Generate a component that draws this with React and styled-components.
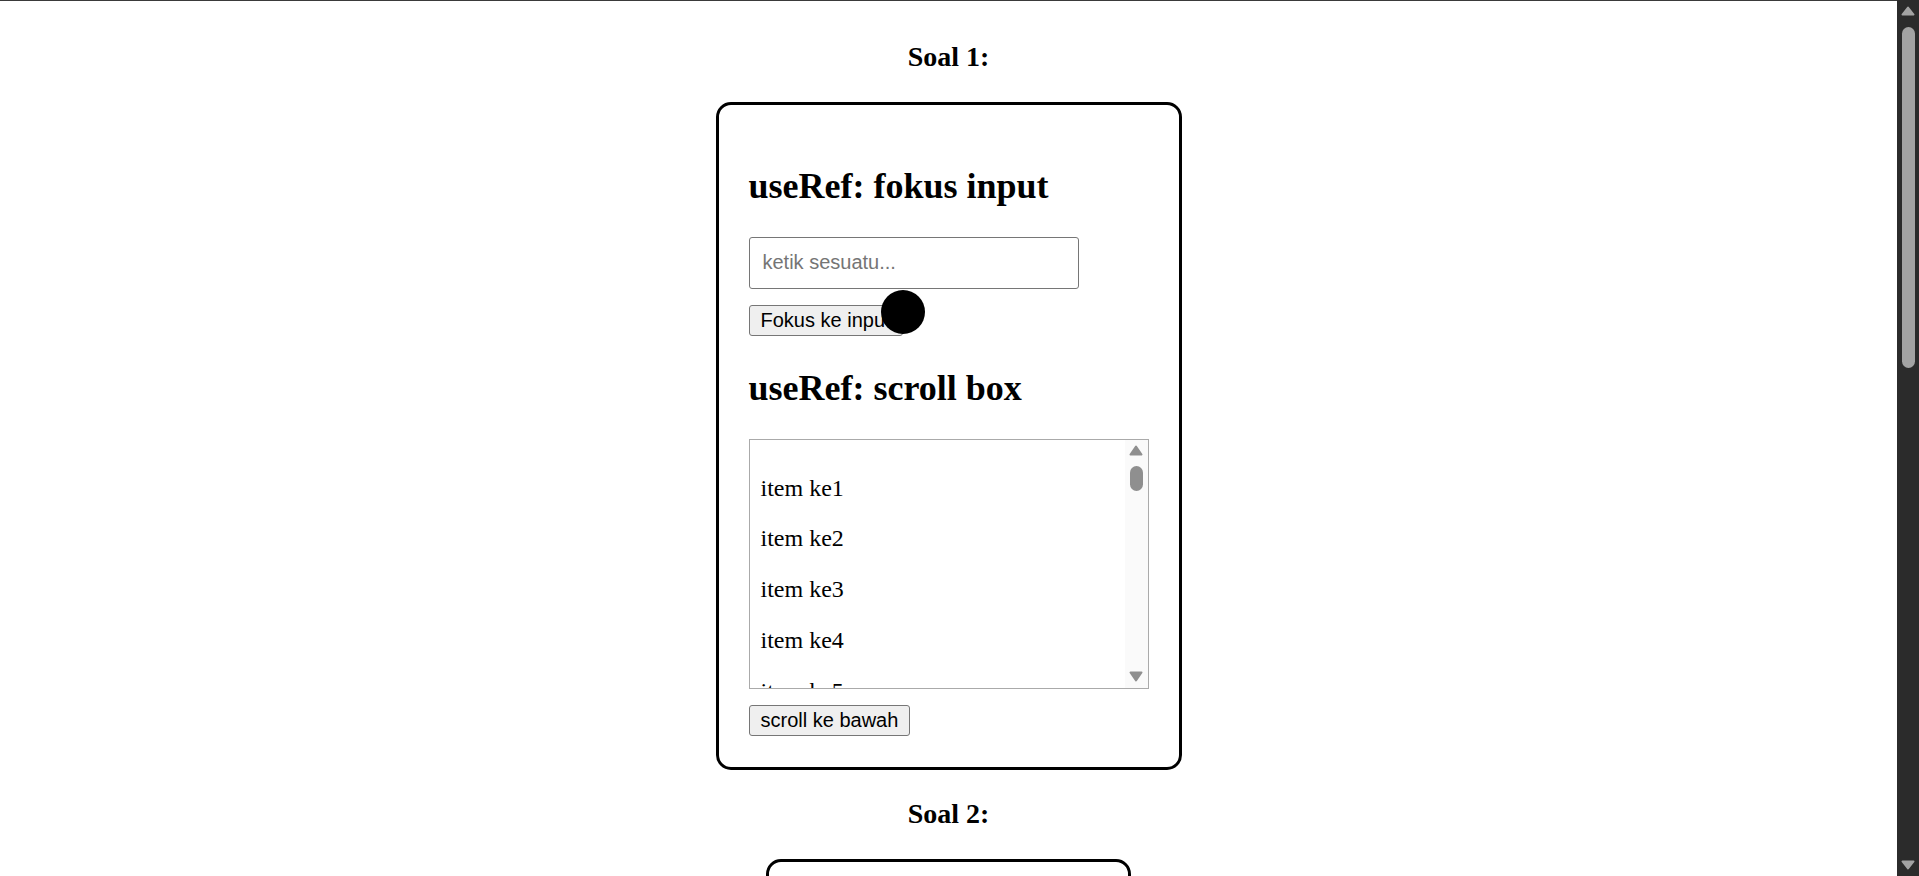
import React, { useRef, useState, useEffect, useCallback } from "react";
import styled, { createGlobalStyle } from "styled-components";

const GlobalStyle = createGlobalStyle`
  html {
    border-top: 1px solid #3a3a3a;
    background: #ffffff;
    scrollbar-width: none;
  }
  html::-webkit-scrollbar {
    display: none;
  }
  body {
    margin: 12px;
    font-family: "Liberation Serif", "Times New Roman", serif;
    font-size: 24px;
    color: #000000;
  }
`;

const Page = styled.main`
  display: flex;
  flex-direction: column;
  align-items: center;
  margin-right: 22px;
`;

const SoalTitle = styled.h3`
  margin: 28px 0 29px;
  font-size: 28px;
  line-height: 32px;
  font-weight: bold;
  text-align: center;
`;

const Card = styled.section`
  box-sizing: border-box;
  width: ${(p) => p.$width}px;
  border: 3px solid #000000;
  border-radius: 15px;
  padding: 30px;
`;

const SectionTitle = styled.h2`
  margin: 29.9px 0;
  font-size: 36px;
  line-height: 42px;
  font-weight: bold;
`;

const TextInput = styled.input`
  display: block;
  box-sizing: border-box;
  width: 330px;
  margin: 0 0 16px;
  padding: 13.5px 13px;
  font-family: "Liberation Sans", Arial, sans-serif;
  font-size: 20px;
  line-height: 23px;
  color: #000000;
  background: #ffffff;
  border: 1px solid #767676;
  border-radius: 3px;
  outline: none;

  &::placeholder {
    color: #757575;
  }
`;

const ControlRow = styled.div`
  display: flex;
  align-items: flex-start;
  gap: 9px;
  min-height: 32px;
`;

const Button = styled.button`
  font-family: "Liberation Sans", Arial, sans-serif;
  font-size: 20px;
  line-height: 25px;
  padding: 2px 11px;
  color: #000000;
  background: #efefef;
  border: 1px solid #767676;
  border-radius: 3px;
  cursor: pointer;
`;

/* ---------- scroll box with its own scrollbar ---------- */

const ScrollFrame = styled.div`
  box-sizing: border-box;
  display: flex;
  width: 400px;
  height: 250px;
  margin-bottom: 16px;
  border: 1px solid #aaaaaa;
  background: #ffffff;
`;

const ScrollViewport = styled.div`
  flex: 1;
  min-width: 0;
  padding: 11px;
  overflow-y: scroll;
  scrollbar-width: none;

  &::-webkit-scrollbar {
    display: none;
  }
`;

const Rail = styled.div`
  display: flex;
  flex-direction: column;
  width: ${(p) => p.$size}px;
  flex-shrink: 0;
  background: ${(p) => p.$track};
`;

const RailArrow = styled.button`
  display: flex;
  align-items: center;
  justify-content: center;
  height: ${(p) => p.$height}px;
  padding: 0;
  border: 0;
  background: transparent;
  cursor: default;
`;

const RailTrack = styled.div`
  position: relative;
  flex: 1;
`;

const RailThumb = styled.div`
  position: absolute;
  left: 50%;
  width: 13px;
  margin-left: -6.5px;
  border-radius: 7px;
  background: ${(p) => p.$color};
`;

const Triangle = ({ dir, color, w = 14, h = 11 }) => (
  <svg width={w} height={h} viewBox={`0 0 ${w} ${h}`} aria-hidden="true">
    <polygon
      points={
        dir === "up"
          ? `${w / 2},1.5 ${w - 1.5},${h - 1.5} 1.5,${h - 1.5}`
          : `1.5,1.5 ${w - 1.5},1.5 ${w / 2},${h - 1.5}`
      }
      fill={color}
      stroke={color}
      strokeWidth="2"
      strokeLinejoin="round"
    />
  </svg>
);

const Item = styled.p`
  margin: 24px 0;
  line-height: 26.8px;
`;

const Text = styled.p`
  margin: 24px 0;
  line-height: 27.6px;
`;

const PlayArea = styled.div`
  box-sizing: border-box;
  height: 390px;
  margin: 24px 0;
  border: 1px dashed #999999;
  border-radius: 6px;
  display: flex;
  align-items: center;
  justify-content: center;
  color: #555555;
`;

const Follower = styled.div`
  position: fixed;
  width: 44px;
  height: 44px;
  margin: -22px 0 0 -22px;
  border-radius: 50%;
  background: #000000;
  pointer-events: none;
  z-index: 10;
`;

/* ---------- page scrollbar (fixed on the right) ---------- */

const PageRail = styled.div`
  position: fixed;
  top: 0;
  right: 0;
  bottom: 0;
  display: flex;
  flex-direction: column;
  width: 22px;
  background: #2b2b2b;
  z-index: 20;
`;

const items = Array.from({ length: 40 }, (_, i) => i + 1);

function ScrollList({ boxRef }) {
  const [thumb, setThumb] = useState({ top: 4.7, len: 25 });
  const trackRef = useRef(null);

  const update = useCallback(() => {
    const el = boxRef.current;
    const track = trackRef.current;
    if (!el || !track) return;
    const inset = 4.7;
    const avail = track.clientHeight - inset * 2;
    const len = Math.max(25, (avail * el.clientHeight) / el.scrollHeight);
    const max = el.scrollHeight - el.clientHeight;
    const top = inset + (max > 0 ? ((avail - len) * el.scrollTop) / max : 0);
    setThumb({ top, len });
  }, [boxRef]);

  useEffect(() => {
    update();
  }, [update]);

  const step = (d) => {
    if (boxRef.current) boxRef.current.scrollTop += d;
  };

  return (
    <ScrollFrame>
      <ScrollViewport ref={boxRef} onScroll={update}>
        {items.map((n) => (
          <Item key={n}>item ke{n}</Item>
        ))}
      </ScrollViewport>
      <Rail $size={23} $track="#fafafa">
        <RailArrow $height={22} onClick={() => step(-40)} aria-label="scroll up">
          <Triangle dir="up" color="#8f8f8f" />
        </RailArrow>
        <RailTrack ref={trackRef}>
          <RailThumb $color="#8f8f8f" style={{ top: thumb.top, height: thumb.len }} />
        </RailTrack>
        <RailArrow $height={22} onClick={() => step(40)} aria-label="scroll down">
          <Triangle dir="down" color="#8f8f8f" />
        </RailArrow>
      </Rail>
    </ScrollFrame>
  );
}

function PageScrollbar() {
  const [thumb, setThumb] = useState({ top: 5, len: 338 });
  const trackRef = useRef(null);

  useEffect(() => {
    const update = () => {
      const track = trackRef.current;
      if (!track) return;
      const doc = document.documentElement;
      const inset = 5;
      const avail = track.clientHeight - inset * 2;
      const len = Math.max(30, (avail * window.innerHeight) / doc.scrollHeight);
      const max = doc.scrollHeight - window.innerHeight;
      const top = inset + (max > 0 ? ((avail - len) * window.scrollY) / max : 0);
      setThumb({ top, len });
    };
    update();
    window.addEventListener("scroll", update);
    window.addEventListener("resize", update);
    return () => {
      window.removeEventListener("scroll", update);
      window.removeEventListener("resize", update);
    };
  }, []);

  return (
    <PageRail>
      <RailArrow $height={22} onClick={() => window.scrollBy(0, -40)} aria-label="page up">
        <Triangle dir="up" color="#a3a3a3" w={14} h={10} />
      </RailArrow>
      <RailTrack ref={trackRef}>
        <RailThumb $color="#a3a3a3" style={{ top: thumb.top, height: thumb.len }} />
      </RailTrack>
      <RailArrow $height={22} onClick={() => window.scrollBy(0, 40)} aria-label="page down">
        <Triangle dir="down" color="#a3a3a3" w={14} h={10} />
      </RailArrow>
    </PageRail>
  );
}

function SoalSatu() {
  const inputRef = useRef(null);
  const boxRef = useRef(null);

  const focusInput = () => {
    inputRef.current && inputRef.current.focus();
  };

  const scrollDown = () => {
    if (boxRef.current) {
      boxRef.current.scrollTop = boxRef.current.scrollHeight;
    }
  };

  return (
    <Card $width={466}>
      <SectionTitle>useRef: fokus input</SectionTitle>
      <TextInput ref={inputRef} placeholder="ketik sesuatu..." />
      <ControlRow>
        <Button onClick={focusInput}>Fokus ke input</Button>
      </ControlRow>
      <SectionTitle>useRef: scroll box</SectionTitle>
      <ScrollList boxRef={boxRef} />
      <ControlRow>
        <Button onClick={scrollDown}>scroll ke bawah</Button>
      </ControlRow>
    </Card>
  );
}

function SoalDua() {
  const [seconds, setSeconds] = useState(0);
  const timerRef = useRef(null);
  const [count, setCount] = useState(0);
  const prevRef = useRef(0);

  useEffect(() => {
    prevRef.current = count;
  }, [count]);

  useEffect(() => () => clearInterval(timerRef.current), []);

  const start = () => {
    if (timerRef.current) return;
    timerRef.current = setInterval(() => setSeconds((s) => s + 1), 1000);
  };
  const stop = () => {
    clearInterval(timerRef.current);
    timerRef.current = null;
  };
  const reset = () => {
    stop();
    setSeconds(0);
  };

  return (
    <Card $width={365}>
      <SectionTitle>useRef: stopwatch</SectionTitle>
      <Text>Waktu: {seconds} detik</Text>
      <ControlRow>
        <Button onClick={start}>Mulai</Button>
        <Button onClick={stop}>Stop</Button>
        <Button onClick={reset}>Reset</Button>
      </ControlRow>
      <SectionTitle>useRef: nilai lama</SectionTitle>
      <Text>Sekarang: {count}</Text>
      <Text>Sebelumnya: {prevRef.current}</Text>
      <ControlRow>
        <Button onClick={() => setCount((c) => c + 1)}>tambah</Button>
      </ControlRow>
    </Card>
  );
}

function SoalTiga() {
  const [pos, setPos] = useState({ x: 903, y: 312 });

  useEffect(() => {
    const move = (e) => setPos({ x: e.clientX, y: e.clientY });
    window.addEventListener("mousemove", move);
    return () => window.removeEventListener("mousemove", move);
  }, []);

  return (
    <Card $width={420}>
      <SectionTitle>useRef: kursor</SectionTitle>
      <Text>Gerakkan mouse, lingkaran hitam akan mengikuti kursor.</Text>
      <PlayArea>
        x: {Math.round(pos.x)}, y: {Math.round(pos.y)}
      </PlayArea>
      <Follower style={{ left: pos.x, top: pos.y }} />
    </Card>
  );
}

export default function App() {
  return (
    <>
      <GlobalStyle />
      <Page>
        <SoalTitle>Soal 1:</SoalTitle>
        <SoalSatu />
        <SoalTitle>Soal 2:</SoalTitle>
        <SoalDua />
        <SoalTitle>Soal 3:</SoalTitle>
        <SoalTiga />
      </Page>
      <PageScrollbar />
    </>
  );
}
